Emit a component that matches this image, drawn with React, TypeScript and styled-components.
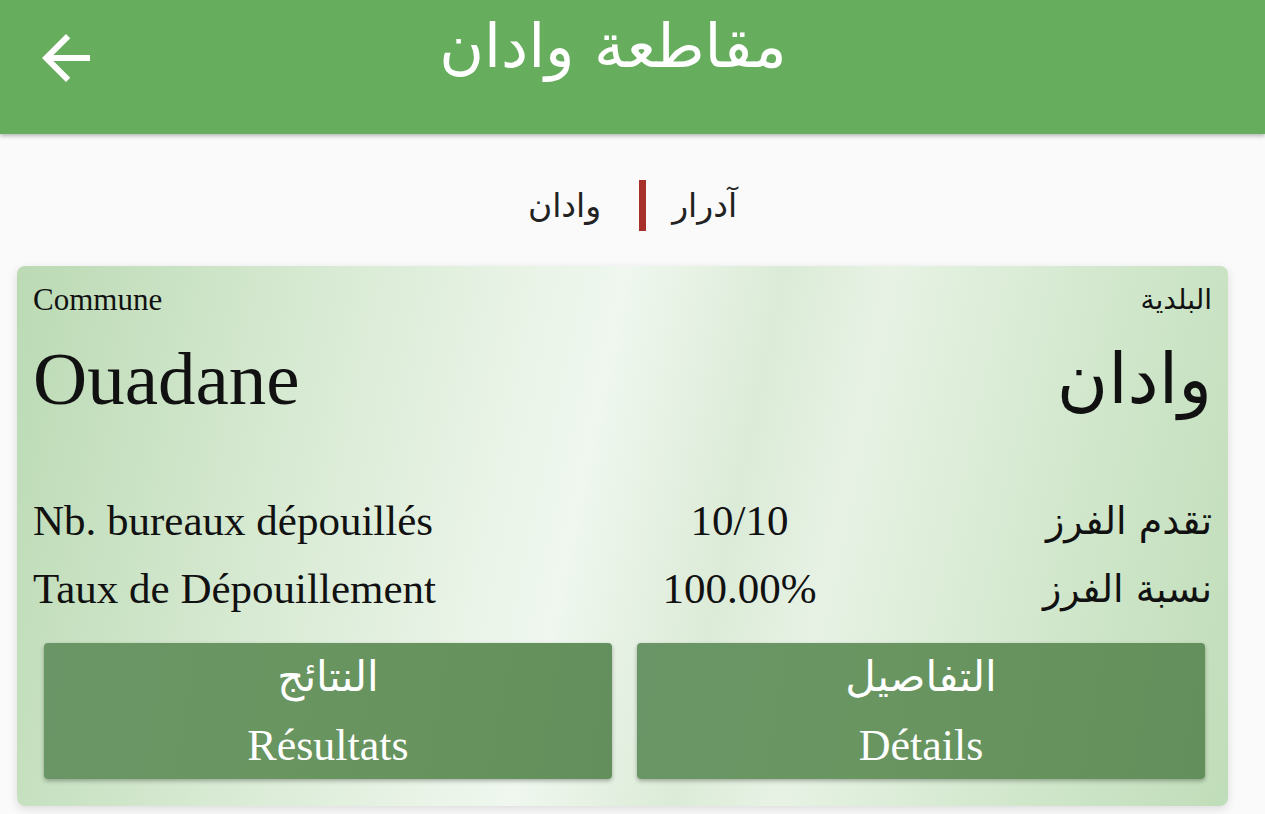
import React from "react";
import styled, { createGlobalStyle } from "styled-components";

const Global = createGlobalStyle`
  html, body { margin: 0; padding: 0; background: #fafafa; }
  body { font-family: "Liberation Serif", "DejaVu Sans", serif; color: #111; }
  * { box-sizing: border-box; }
`;

const Page = styled.div`
  width: 1265px;
  min-height: 814px;
  background: #fafafa;
  overflow: hidden;
`;

const AppBar = styled.header`
  height: 134px;
  background: #67ad5e;
  box-shadow: 0 2px 4px rgba(0, 0, 0, 0.28);
  display: flex;
  align-items: flex-start;
  position: relative;
  z-index: 1;
`;

const BackButton = styled.button`
  width: 72px;
  height: 72px;
  margin: 22px 0 0 30px;
  padding: 0;
  border: 0;
  background: transparent;
  display: flex;
  align-items: center;
  justify-content: center;
  cursor: pointer;
`;

const Title = styled.h1`
  flex: 1;
  margin: 0;
  padding: 8px 141px 0 0;
  text-align: center;
  color: #ffffff;
  font-family: "DejaVu Sans", sans-serif;
  font-weight: normal;
  font-size: 61px;
  line-height: 76px;
`;

const Crumbs = styled.nav`
  margin-top: 46px;
  height: 51px;
  display: flex;
  justify-content: center;
  align-items: center;
  gap: 26px;
  font-family: "DejaVu Sans", sans-serif;
  font-size: 33px;
  color: #222;
`;

const CrumbText = styled.span<{ $extra?: number }>`
  margin-right: ${(p) => p.$extra ?? 0}px;
`;

const CrumbBar = styled.span`
  width: 7px;
  height: 51px;
  background: #a8302a;
`;

const Card = styled.section`
  margin: 35px 37px 0 17px;
  padding: 16px 16px 27px;
  border-radius: 8px;
  background: linear-gradient(
    102deg,
    #bbdab4 0%,
    #d6e9d1 22%,
    #eaf4e8 40%,
    #eff7ee 46%,
    #dcebd8 58%,
    #e7f2e4 66%,
    #d3e8ce 82%,
    #c0ddb9 100%
  );
  box-shadow: 0 3px 10px rgba(0, 0, 0, 0.12);
`;

const Row = styled.div<{ $top?: number; $lh: number; $size: number }>`
  display: flex;
  justify-content: space-between;
  align-items: center;
  margin-top: ${(p) => p.$top ?? 0}px;
  font-size: ${(p) => p.$size}px;
  line-height: ${(p) => p.$lh}px;
`;

const Arabic = styled.span<{ $size?: number }>`
  font-family: "DejaVu Sans", sans-serif;
  ${(p) => (p.$size ? `font-size: ${p.$size}px;` : "")}
  direction: rtl;
`;

const Latin = styled.span`
  font-family: "Liberation Serif", serif;
`;

const Actions = styled.div`
  display: flex;
  gap: 25px;
  margin: 20px 7px 0 11px;
`;

const ActionButton = styled.button`
  flex: 1;
  height: 136px;
  border: 0;
  border-radius: 4px;
  background: linear-gradient(100deg, #6a9667 0%, #68955f 50%, #628f5b 100%);
  box-shadow: 0 2px 4px rgba(0, 0, 0, 0.3);
  color: #fff;
  display: flex;
  flex-direction: column;
  align-items: center;
  justify-content: flex-start;
  padding: 8px 0 0;
  cursor: pointer;
`;

const BtnArabic = styled.span`
  font-family: "DejaVu Sans", sans-serif;
  font-size: 42px;
  line-height: 52px;
`;

const BtnLatin = styled.span`
  font-family: "Liberation Serif", serif;
  font-size: 44px;
  line-height: 50px;
  margin-top: 18px;
`;

const ArrowIcon = () => (
  <svg width="72" height="72" viewBox="0 0 24 24" fill="#ffffff">
    <path d="M20 11H7.83l5.59-5.59L12 4l-8 8 8 8 1.41-1.41L7.83 13H20v-2z" />
  </svg>
);

export default function App() {
  return (
    <Page>
      <Global />
      <AppBar>
        <BackButton aria-label="back">
          <ArrowIcon />
        </BackButton>
        <Title>مقاطعة وادان</Title>
      </AppBar>

      <Crumbs>
        <CrumbText $extra={12}>وادان</CrumbText>
        <CrumbBar />
        <CrumbText>آدرار</CrumbText>
      </Crumbs>

      <Card>
        <Row $size={31} $lh={36}>
          <Latin>Commune</Latin>
          <Arabic $size={28}>البلدية</Arabic>
        </Row>
        <Row $top={18} $size={75} $lh={86}>
          <Latin>Ouadane</Latin>
          <Arabic $size={70}>وادان</Arabic>
        </Row>
        <Row $top={65} $size={43} $lh={68}>
          <Latin>Nb. bureaux dépouillés</Latin>
          <Latin>10/10</Latin>
          <Arabic $size={38}>تقدم الفرز</Arabic>
        </Row>
        <Row $size={43} $lh={68}>
          <Latin>Taux de Dépouillement</Latin>
          <Latin>100.00%</Latin>
          <Arabic $size={38}>نسبة الفرز</Arabic>
        </Row>
        <Actions>
          <ActionButton>
            <BtnArabic>النتائج</BtnArabic>
            <BtnLatin>Résultats</BtnLatin>
          </ActionButton>
          <ActionButton>
            <BtnArabic>التفاصيل</BtnArabic>
            <BtnLatin>Détails</BtnLatin>
          </ActionButton>
        </Actions>
      </Card>
    </Page>
  );
}
